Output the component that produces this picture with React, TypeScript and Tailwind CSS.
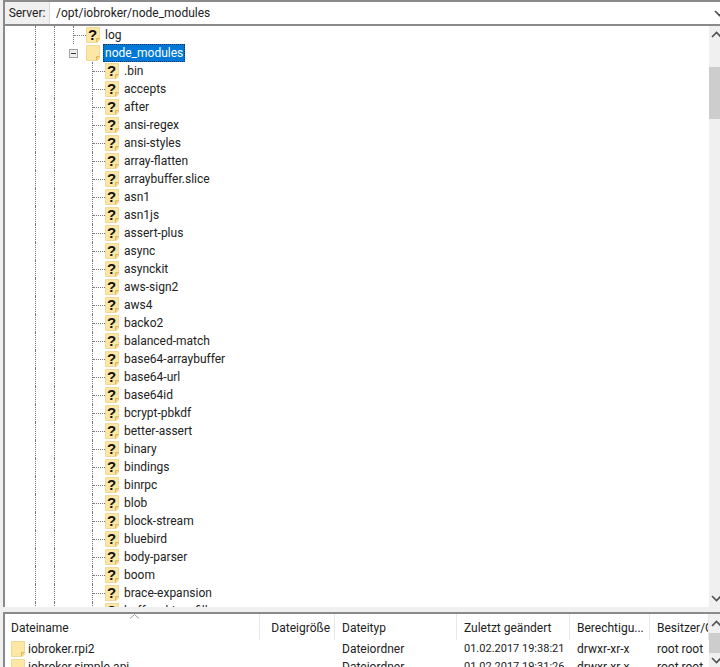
const names = [
  '.bin', 'accepts', 'after', 'ansi-regex', 'ansi-styles', 'array-flatten', 'arraybuffer.slice', 'asn1', 'asn1js',
  'assert-plus', 'async', 'asynckit', 'aws-sign2', 'aws4', 'backo2', 'balanced-match', 'base64-arraybuffer',
  'base64-url', 'base64id', 'bcrypt-pbkdf', 'better-assert', 'binary', 'bindings', 'binrpc', 'blob', 'block-stream',
  'bluebird', 'body-parser', 'boom', 'brace-expansion', 'buffer-shims-fill',
]

const Folder = ({ unknown = false }: { unknown?: boolean }) => (
  <svg width="14" height="16" viewBox="0 0 14 16" className="shrink-0">
    <path d="M0.5 0.5H13.5V13L11.5 15.5H0.5Z" fill="#fce7a4" stroke="#f0d998" />
    <path d="M10.5 15V11.5H13.5" fill="#f3cd6c" stroke="#dcb860" />
    {unknown && (
      <text x="6.5" y="12.5" textAnchor="middle" fontSize="15" fontWeight="700" fontFamily="Liberation Sans, sans-serif" fill="#111">
        ?
      </text>
    )}
  </svg>
)

const Guide = ({ show = true, branch = false, last = false }: { show?: boolean; branch?: boolean; last?: boolean }) => (
  <div className={`relative ${last ? 'w-[13px]' : 'w-[19px]'} shrink-0 h-full ${show ? 'border-l border-dotted border-[#777]' : ''}`}>
    {branch && <div className="absolute left-0 top-[9px] w-[12px] border-t border-dotted border-[#777]" />}
  </div>
)

const TreeRow = ({ name }: { name: string }) => (
  <div className="flex h-[18px] shrink-0 items-center">
    <Guide />
    <Guide />
    <Guide show={false} />
    <Guide branch last />
    <Folder unknown />
    <span className="ml-[5px] whitespace-nowrap">{name}</span>
  </div>
)

const Chevron = ({ up = false }: { up?: boolean }) => (
  <svg width="11" height="7" viewBox="0 0 11 7" className="shrink-0">
    <path d={up ? 'M1 6L5.5 1.5L10 6' : 'M1 1L5.5 5.5L10 1'} fill="none" stroke="#505050" strokeWidth="1.6" />
  </svg>
)

const columns = [
  { label: 'Dateiname', width: 'w-[255px]', align: 'pl-[6px]' },
  { label: 'Dateigröße', width: 'w-[75px]', align: 'justify-end pr-[4px]' },
  { label: 'Dateityp', width: 'w-[122px]', align: 'pl-[7px]' },
  { label: 'Zuletzt geändert', width: 'w-[113px]', align: 'pl-[7px]' },
  { label: 'Berechtigu...', width: 'w-[80px]', align: 'pl-[7px]' },
  { label: 'Besitzer/G', width: 'w-[59px]', align: 'pl-[7px]' },
]

const files = [
  { name: 'iobroker.rpi2', date: '01.02.2017 19:38:21' },
  { name: 'iobroker.simple-api', date: '01.02.2017 19:31:26' },
]

export default function App() {
  return (
    <div className="flex h-[667px] w-[720px] flex-col overflow-hidden bg-[#f0f0f0] pl-[3px] font-['Roboto','Noto_Sans',sans-serif] text-[12px] leading-[18px] text-[#222]">
      {/* server path */}
      <div className="flex h-[26px] shrink-0 border-y-2 border-l-2 border-[#8a8a8a] bg-white">
        <div className="flex w-[45px] items-center justify-center border-r border-[#d9d9d9] bg-[#f0f0f0]">Server:</div>
        <div className="flex flex-1 items-center pl-[6px]">/opt/iobroker/node_modules</div>
        <div className="flex w-[6px] items-center overflow-hidden">
          <Chevron />
        </div>
      </div>

      {/* remote tree */}
      <div className="flex h-[581px] shrink-0 border-l-2 border-[#8a8a8a] bg-white">
        <div className="flex-1 overflow-hidden pl-[30px]">
          <div className="flex h-[18px] items-center">
            <Guide />
            <Guide />
            <Guide branch last />
            <Folder unknown />
            <span className="ml-[5px]">log</span>
          </div>
          <div className="flex h-[18px] items-center">
            <Guide />
            <Guide />
            <div className="flex h-full w-[13px] shrink-0 items-center">
              <div className="-ml-[4px] flex h-[9px] w-[9px] shrink-0 items-center justify-center border border-[#a0a0a0] bg-[#eee]">
                <div className="h-px w-[5px] bg-[#333]" />
              </div>
            </div>
            <Folder />
            <span className="ml-[3px] h-[18px] whitespace-nowrap bg-[#0078d7] px-[2px] text-white outline-1 -outline-offset-1 outline-dotted outline-[#0a3a66]">
              node_modules
            </span>
          </div>
          {names.map(name => (
            <TreeRow key={name} name={name} />
          ))}
        </div>
        <div className="flex w-[11px] shrink-0 flex-col overflow-hidden bg-[#f0f0f0]">
          <div className="flex h-[17px] items-center pl-[2px]">
            <Chevron up />
          </div>
          <div className="mt-[24px] h-[52px] w-full bg-[#cdcdcd]" />
          <div className="flex-1" />
          <div className="flex h-[17px] items-center pl-[2px]">
            <Chevron />
          </div>
        </div>
      </div>

      {/* splitter */}
      <div className="h-[7px] shrink-0 border-b-2 border-[#8a8a8a] bg-[#f0f0f0]" />

      {/* local file list */}
      <div className="flex min-h-0 flex-1 border-l-2 border-[#8a8a8a] bg-white">
        <div className="flex-1 overflow-hidden">
          <div className="relative flex h-[26px] items-center">
            <svg width="11" height="5" viewBox="0 0 11 5" className="absolute left-[124px] top-0">
              <path d="M1 4.5L5.5 0.5L10 4.5" fill="none" stroke="#999" />
            </svg>
            {columns.map(col => (
              <div key={col.label} className={`${col.width} ${col.align} flex h-full shrink-0 items-center overflow-hidden whitespace-nowrap border-r border-[#e8e8e8] pt-px`}>
                {col.label}
              </div>
            ))}
          </div>
          {files.map(file => (
            <div key={file.name} className="flex h-[18px] items-center">
              <div className="flex w-[255px] shrink-0 items-center pl-[6px]">
                <Folder />
                <span className="ml-[3px]">{file.name}</span>
              </div>
              <div className="w-[75px] shrink-0" />
              <div className="w-[122px] shrink-0 pl-[7px]">Dateiordner</div>
              <div className="w-[113px] shrink-0 whitespace-nowrap pl-[7px] text-[11px]">{file.date}</div>
              <div className="w-[80px] shrink-0 pl-[7px]">drwxr-xr-x</div>
              <div className="w-[59px] shrink-0 whitespace-nowrap pl-[7px]">root root</div>
            </div>
          ))}
        </div>
        <div className="flex w-[11px] shrink-0 flex-col overflow-hidden bg-[#f0f0f0]">
          <div className="flex h-[19px] items-center pl-[2px]">
            <Chevron up />
          </div>
          <div className="h-[20px] w-full bg-[#cdcdcd]" />
          <div className="flex flex-1 items-center pl-[2px]">
            <Chevron />
          </div>
        </div>
      </div>
    </div>
  )
}
